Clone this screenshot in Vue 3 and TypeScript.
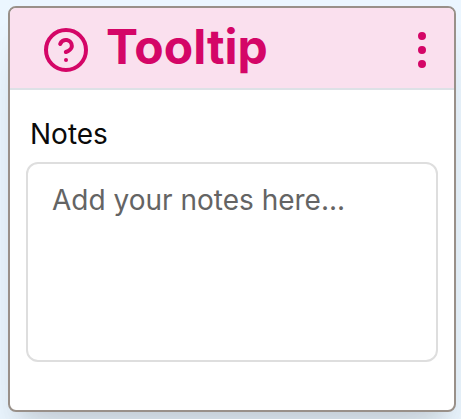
<script setup lang="ts">
import { ref } from 'vue'

const title = 'Tooltip'
const notes = ref<string>('')
const menuDots: number[] = [5, 12, 19]
</script>

<template>
  <main class="canvas">
    <section class="card">
      <header class="card-header">
        <svg class="icon" viewBox="0 0 24 24" aria-hidden="true">
          <circle cx="12" cy="12" r="10" />
          <path d="M9.09 9a3 3 0 0 1 5.83 1c0 2-3 3-3 3" />
          <path d="M12 17h.01" />
        </svg>
        <h1 class="title">{{ title }}</h1>
        <button class="menu" type="button" aria-label="Menu">
          <svg class="icon" viewBox="0 0 24 24" aria-hidden="true">
            <circle v-for="y in menuDots" :key="y" cx="12" :cy="y" r="1" />
          </svg>
        </button>
      </header>
      <div class="card-body">
        <label class="label" for="notes">Notes</label>
        <textarea id="notes" v-model="notes" class="notes" placeholder="Add your notes here..."></textarea>
      </div>
    </section>
  </main>
</template>

<style>
body {
  margin: 0;
  overflow: hidden;
}
</style>

<style scoped>
.canvas {
  box-sizing: border-box;
  width: 461px;
  height: 419px;
  padding: 6px 5px 7px 8px;
  overflow: hidden;
  background: #ebf6ff;
  font-family: Inter, "Liberation Sans", sans-serif;
}

.card {
  box-sizing: border-box;
  height: 406px;
  display: flex;
  flex-direction: column;
  overflow: hidden;
  border: 2px solid #999089;
  border-radius: 8px;
  background: #fff;
  box-shadow: 0 40px 50px -10px rgba(0, 0, 0, 0.1), 0 16px 20px -12px rgba(0, 0, 0, 0.1);
}

.card-header {
  box-sizing: border-box;
  flex: none;
  height: 82px;
  display: flex;
  align-items: center;
  padding: 4px 8px 0 32px;
  border-bottom: 2px solid #dde1e6;
  background: #fae0ee;
  color: #d40667;
}

.icon {
  display: block;
  flex: none;
  width: 48px;
  height: 48px;
  fill: none;
  stroke: currentColor;
  stroke-width: 2;
  stroke-linecap: round;
  stroke-linejoin: round;
}

.title {
  flex: 1;
  margin: -7px 0 0 16px;
  font-size: 48px;
  font-weight: 700;
  line-height: 56px;
}

.menu {
  padding: 0;
  border: 0;
  background: none;
  color: inherit;
}

.card-body {
  flex: 1;
  display: flex;
  flex-direction: column;
  padding: 24px 16px 0;
}

.label {
  padding-left: 4px;
  font-size: 28px;
  line-height: 40px;
  color: #0a0a0a;
}

.notes {
  box-sizing: border-box;
  width: 412px;
  height: 200px;
  margin: 8px 0 0;
  padding: 16px 24px;
  resize: none;
  border: 2px solid #dedede;
  border-radius: 12px;
  outline: none;
  background: #fff;
  font: 28px/40px Inter, "Liberation Sans", sans-serif;
  color: #0a0a0a;
}

.notes::placeholder {
  color: #646464;
  opacity: 1;
}
</style>
